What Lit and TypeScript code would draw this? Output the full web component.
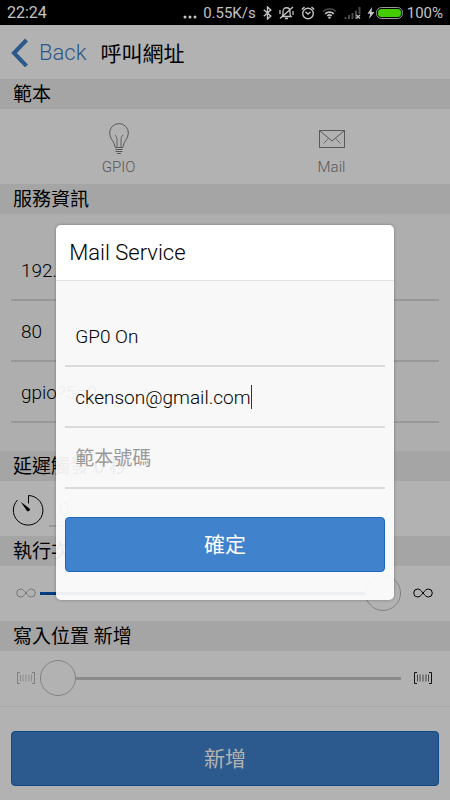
import { LitElement, html, css, svg } from "lit";
import { customElement, property, state } from "lit/decorators.js";
import { styleMap } from "lit/directives/style-map.js";

const bulb = svg`<svg class="bulb" viewBox="0 0 20 32" width="20" height="32" fill="none" stroke="currentColor">
  <path d="M6 24C6 19 .6 16 .6 10a9.4 9.4 0 0 1 18.8 0C19.4 16 14 19 14 24"/>
  <path d="M8 24v-7c0-2-.5-3.500-2-5M12 24v-7c0-2 .5-3.500 2-5" stroke-width=".9"/>
  <path d="M6 24.500h8M6.500 26.500h7M6.500 28.500h7M8 30.500h4"/>
</svg>`;

const mail = svg`<svg viewBox="0 0 26 18" width="26" height="18" fill="none" stroke="currentColor">
  <rect x=".5" y=".5" width="25" height="17"/>
  <path d="M1 1l12 10L25 1"/>
  <path d="M4.500 13.500l5-5M21.500 13.500l-5-5" stroke-width=".8"/>
</svg>`;

const timer = svg`<svg viewBox="0 0 32 32" width="32" height="32" fill="none" stroke="currentColor">
  <path d="M16.500 9.500V1.500A14.800 14.800 0 1 1 5.500 6" stroke-width="1"/>
  <path d="M8.500 7.500l9 7a1.800 1.800 0 0 1-2.500 2.500z" fill="currentColor" stroke="none"/>
</svg>`;

const infinity = svg`<svg viewBox="0 0 20 10" width="20" height="10" fill="none" stroke="currentColor">
  <path d="M10 5C8 2.500 6.500 1 4.700 1a4 4 0 0 0 0 8C6.500 9 8 7.500 10 5s3.500-4 5.300-4a4 4 0 0 1 0 8C13.500 9 12 7.500 10 5z"/>
</svg>`;

const barcode = svg`<svg viewBox="0 0 20 12" width="20" height="12" fill="none" stroke="currentColor">
  <path d="M4 .5H1.500v11H4M16 .5h2.500v11H16" stroke-width=".9"/>
  <path d="M4.500 2.500v7M7 2.500v7M10 2.500v7M13 2.500v7M15.500 2.500v7" stroke-width=".6"/>
</svg>`;

const font = css`
  * {
    box-sizing: border-box;
  }
  input,
  button {
    font-family: inherit;
    font-weight: inherit;
    margin: 0;
    border-radius: 0;
    outline: none;
  }
`;

@customElement("status-bar")
class StatusBar extends LitElement {
  static styles = css`
    :host {
      display: flex;
      align-items: center;
      justify-content: space-between;
      height: 25px;
      padding: 0 7px;
      background: #000;
      color: #c4c4c4;
      font: 400 15px/26px Roboto, sans-serif;
    }
    .right {
      display: flex;
      align-items: center;
    }
    .dots {
      margin-right: 6px;
    }
    .bt { margin: 0 7px; }
    .alarm { margin: 0 7px; }
    .signal { margin: 0 6px 0 7px; }
    .pct { margin-left: 3px; }
    svg { display: block; }
    .time { font-size: 16px; }
  `;
  render() {
    return html`
      <span class="time">22:24</span>
      <div class="right">
        <svg class="dots" width="14" height="14" fill="currentColor"><circle cx="2" cy="11" r="1.500"/><circle cx="7" cy="11" r="1.500"/><circle cx="12" cy="11" r="1.500"/></svg>
        <span>0.55K/s</span>
        <svg class="bt" width="9" height="14" viewBox="0 0 9 14" fill="none" stroke="currentColor" stroke-width="1.400"><path d="M.8 3.800l7 6.200L4.500 13V1l3.300 3L.8 10.200"/></svg>
        <svg width="15" height="14" viewBox="0 0 15 14" fill="none" stroke="currentColor" stroke-width="1.300"><path d="M3 10.500c1.500-1.500 1-3 1-5 0-5 7-5 7 0 0 2-.5 3.500 1 5zM6 12.500h3M1 12.500L14 1M1 4v4M14 5v4"/></svg>
        <svg class="alarm" width="14" height="14" viewBox="0 0 14 14" fill="none" stroke="currentColor" stroke-width="1.400"><circle cx="7" cy="7.500" r="5.300"/><path d="M4.500 5.800L7 8l2.500-2M.8 3.500L3.500 1M10.500 1l2.700 2.500"/></svg>
        <svg width="15" height="12" viewBox="0 0 15 12" fill="none" stroke-width="1.700"><path d="M1 4.500a9.500 9.500 0 0 1 13 0" stroke="#444"/><path d="M3.200 6.800a6.300 6.300 0 0 1 8.600 0M5.300 9a3.200 3.200 0 0 1 4.400 0" stroke="currentColor"/><circle cx="7.500" cy="10.600" r="1.200" fill="currentColor"/></svg>
        <svg class="signal" width="17" height="12" viewBox="0 0 17 12" fill="none"><path d="M1.500 12v-2M5 12V8M8.500 12V6M12 12V3.500M15.500 7V0" stroke="#4a4a4a" stroke-width="2"/><path d="M12.500 8l3.500 3.500M16 8l-3.500 3.500" stroke="currentColor" stroke-width="1.200"/></svg>
        <svg width="8" height="12" viewBox="0 0 8 12" fill="currentColor"><path d="M5 0L.5 6.800h2.700L2 12l5.500-7H4.600z"/></svg>
        <svg width="29" height="12" viewBox="0 0 29 12"><rect x="1.500" y=".5" width="26" height="11" rx="5" fill="none" stroke="#999"/><rect x="3" y="2" width="23" height="8" rx="3.500" fill="#4c0"/></svg>
        <span class="pct">100%</span>
      </div>`;
  }
}

@customElement("range-row")
class RangeRow extends LitElement {
  @property() label = "";
  @property() icon = "infinity";
  @property({ type: Number }) value = 0;

  static styles = [
    font,
    css`
      :host {
        box-sizing: border-box;
        display: flex;
        align-items: center;
        height: 55px;
        padding: 0 17px 2px 16px;
        gap: 4px;
      }
      .end {
        display: flex;
        width: 20px;
        color: #000;
      }
      .start {
        color: #aaa;
      }
      .range {
        appearance: none;
        flex: 1;
        min-width: 0;
        height: 36px;
        margin-right: 8px;
        background: linear-gradient(#0058b8, #0058b8) 0 17px / var(--fill) 3px no-repeat,
          linear-gradient(#c8c8c8, #c8c8c8) 0 17px / 100% 3px no-repeat;
      }
      .range::-webkit-slider-thumb {
        appearance: none;
        width: 36px;
        height: 36px;
        border: 1px solid #bbb;
        border-radius: 50%;
        background: #fff;
      }
    `,
  ];
  render() {
    const glyph = this.icon === "infinity" ? infinity : barcode;
    return html`
      <span class="end start">${glyph}</span>
      <input class="range" type="range" aria-label=${this.label} min="0" max="100" .value=${String(this.value)}
        style=${styleMap({ "--fill": `${Math.max(this.value, 1)}%` })}
        @input=${(e: Event) => (this.value = Number((e.target as HTMLInputElement).value))} />
      <span class="end">${glyph}</span>`;
  }
}

@customElement("app-root")
class AppRoot extends LitElement {
  @state() private fields = [
    { label: "位址", value: "192.168.0.1" },
    { label: "連接埠", value: "80" },
    { label: "路徑", value: "gpio?5=0" },
  ];

  static styles = [
    font,
    css`
      :host {
        display: flex;
        flex-direction: column;
        min-height: 100vh;
        font-family: Roboto, "Noto Sans CJK TC", sans-serif;
        font-weight: 300;
        color: #000;
      }
      .app {
        position: relative;
        flex: 1;
        display: flex;
        flex-direction: column;
        background: #fff;
      }
      .bar {
        display: flex;
        align-items: center;
        height: 54px;
        padding-left: 11px;
      }
      .back {
        display: flex;
        align-items: center;
        gap: 11px;
        color: #3f80c8;
        font-size: 22px;
        text-decoration: none;
      }
      .title {
        margin: 0 0 0 14px;
        font-size: 21px;
        font-weight: 400;
      }
      .section {
        margin: 0;
        height: 30px;
        padding-left: 13px;
        background: #ededed;
        font-size: 19px;
        line-height: 32px;
        font-weight: 400;
      }
      .templates {
        display: grid;
        grid-template-columns: 1fr 1fr;
        height: 75px;
        padding: 0 12px;
      }
      .template {
        display: flex;
        flex-direction: column;
        align-items: center;
        padding: 12px 0 0;
        border: 0;
        background: none;
        color: #808080;
        font-size: 15px;
        line-height: 20px;
      }
      .icon {
        display: grid;
        place-items: center;
        height: 36px;
      }
      .form {
        padding: 26px 11px 28px;
        background: #fafafa;
      }
      .field {
        position: relative;
      }
      .input {
        display: block;
        width: 100%;
        height: 61px;
        padding: 2px 10px 0;
        border: 0;
        border-bottom: 2px solid #dadada;
        background: none;
        color: #000;
        font-size: 19px;
      }
      .input::placeholder {
        color: #999;
        font-weight: 400;
      }
      .delay {
        display: flex;
        align-items: center;
        height: 55px;
        padding: 2px 0 0 12px;
        gap: 5px;
      }
      .delay .input {
        width: 88px;
        height: 34px;
        color: #777;
      }
      .footer {
        flex: 1;
        padding: 24px 11px 14px;
        border-top: 1px solid #f3f3f3;
      }
      .button {
        display: block;
        width: 100%;
        height: 55px;
        padding: 0 0 3px;
        border: 1px solid #1b69bd;
        border-radius: 4px;
        background: #4182cc;
        color: #fff;
        font-size: 21px;
        font-weight: 400;
      }
      .overlay {
        position: absolute;
        inset: 0;
        display: grid;
        grid-template-columns: 75%;
        place-content: center;
        background: rgba(0, 0, 0, 0.3);
      }
      .dialog {
        border-radius: 5px;
        overflow: hidden;
        box-shadow: 0 0 3px rgba(0, 0, 0, 0.35);
      }
      .heading {
        margin: 0;
        height: 56px;
        padding-left: 13px;
        border-bottom: 1px solid #e2e2e2;
        background: #fff;
        font-size: 22px;
        line-height: 56px;
        font-weight: inherit;
      }
      .body {
        padding: 25px 9px 28px;
        background: rgba(254, 254, 254, 0.93);
      }
      .body .button {
        margin-top: 28px;
      }
      .caret {
        position: absolute;
        left: 186px;
        top: 18px;
        width: 1px;
        height: 24px;
        background: #333;
      }
    `,
  ];

  render() {
    return html`
      <status-bar></status-bar>
      <main class="app">
        <header class="bar">
          <a class="back" href="#">
            <svg width="17" height="30" viewBox="0 0 17 30" fill="none" stroke="currentColor" stroke-width="4"><path d="M15.500 3L3 16l12.500 13"/></svg>
            Back
          </a>
          <h1 class="title">呼叫網址</h1>
        </header>
        <h2 class="section">範本</h2>
        <div class="templates">
          <button class="template"><span class="icon">${bulb}</span>GPIO</button>
          <button class="template"><span class="icon">${mail}</span>Mail</button>
        </div>
        <h2 class="section">服務資訊</h2>
        <div class="form">
          ${this.fields.map((f) => html`<input class="input" aria-label=${f.label} .value=${f.value} />`)}
        </div>
        <h2 class="section"><label for="delay">延遲觸發 0 秒</label></h2>
        <div class="delay">${timer}<input class="input" id="delay" value="0" /></div>
        <h2 class="section">執行次數 永久</h2>
        <range-row label="執行次數" icon="infinity" value="100"></range-row>
        <h2 class="section">寫入位置 新增</h2>
        <range-row label="寫入位置" icon="barcode" value="0"></range-row>
        <footer class="footer"><button class="button">新增</button></footer>
        <div class="overlay">
          <section class="dialog" role="dialog" aria-labelledby="heading">
            <h2 class="heading" id="heading">Mail Service</h2>
            <div class="body">
              <input class="input" aria-label="名稱" value="GP0 On" />
              <div class="field">
                <input class="input" aria-label="Mail" value="ckenson@gmail.com" />
                <span class="caret"></span>
              </div>
              <input class="input" aria-label="範本號碼" placeholder="範本號碼" />
              <button class="button">確定</button>
            </div>
          </section>
        </div>
      </main>`;
  }
}
